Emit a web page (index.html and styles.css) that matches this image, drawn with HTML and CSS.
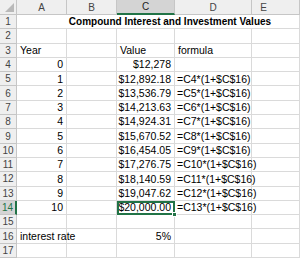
FILE: index.html
```html
<!DOCTYPE html>
<html>
<head>
<meta charset="utf-8">
<link rel="stylesheet" href="styles.css">
</head>
<body>
<div class="sheet">
  <div class="hd corner"><span class="tri"></span></div>
  <div class="hd col">A</div>
  <div class="hd col">B</div>
  <div class="hd col sel">C</div>
  <div class="hd col">D</div>
  <div class="hd col last">E</div>

  <div class="hd row">1</div>
  <div class="c title">Compound Interest and Investment Values</div>

  <div class="hd row">2</div>
  <div class="c"></div><div class="c"></div><div class="c"></div><div class="c"></div><div class="c"></div>

  <div class="hd row">3</div>
  <div class="c">Year</div><div class="c"></div><div class="c">Value</div><div class="c">formula</div><div class="c"></div>

  <div class="hd row">4</div>
  <div class="c r">0</div><div class="c"></div><div class="c r">$12,278</div><div class="c"></div><div class="c"></div>

  <div class="hd row">5</div>
  <div class="c r">1</div><div class="c"></div><div class="c r">$12,892.18</div><div class="c f">=C4*(1+$C$16)</div><div class="c"></div>

  <div class="hd row">6</div>
  <div class="c r">2</div><div class="c"></div><div class="c r">$13,536.79</div><div class="c f">=C5*(1+$C$16)</div><div class="c"></div>

  <div class="hd row">7</div>
  <div class="c r">3</div><div class="c"></div><div class="c r">$14,213.63</div><div class="c f">=C6*(1+$C$16)</div><div class="c"></div>

  <div class="hd row">8</div>
  <div class="c r">4</div><div class="c"></div><div class="c r">$14,924.31</div><div class="c f">=C7*(1+$C$16)</div><div class="c"></div>

  <div class="hd row">9</div>
  <div class="c r">5</div><div class="c"></div><div class="c r">$15,670.52</div><div class="c f">=C8*(1+$C$16)</div><div class="c"></div>

  <div class="hd row">10</div>
  <div class="c r">6</div><div class="c"></div><div class="c r">$16,454.05</div><div class="c f">=C9*(1+$C$16)</div><div class="c"></div>

  <div class="hd row">11</div>
  <div class="c r">7</div><div class="c"></div><div class="c r">$17,276.75</div><div class="c f">=C10*(1+$C$16)</div><div class="c"></div>

  <div class="hd row">12</div>
  <div class="c r">8</div><div class="c"></div><div class="c r">$18,140.59</div><div class="c f">=C11*(1+$C$16)</div><div class="c"></div>

  <div class="hd row">13</div>
  <div class="c r">9</div><div class="c"></div><div class="c r">$19,047.62</div><div class="c f">=C12*(1+$C$16)</div><div class="c"></div>

  <div class="hd row selr">14</div>
  <div class="c r">10</div><div class="c"></div><div class="c r active">$20,000.00<span class="handle"></span></div><div class="c f">=C13*(1+$C$16)</div><div class="c"></div>

  <div class="hd row">15</div>
  <div class="c"></div><div class="c"></div><div class="c"></div><div class="c"></div><div class="c"></div>

  <div class="hd row">16</div>
  <div class="c ov">interest rate</div><div class="c"></div><div class="c r">5%</div><div class="c"></div><div class="c"></div>

  <div class="hd row">17</div>
  <div class="c"></div><div class="c"></div><div class="c"></div><div class="c"></div><div class="c"></div>
</div>
</body>
</html>
```

FILE: styles.css
```css
html, body {
  margin: 0;
  padding: 0;
  background: #ffffff;
  overflow: hidden;
}

.sheet {
  display: grid;
  grid-template-columns: 17px 50px 50px 58px 77px 48px;
  grid-template-rows: 15px repeat(17, 14.3px);
  font-family: "Liberation Sans", Arial, sans-serif;
  font-size: 10.5px;
  color: #000;
  width: 300px;
  overflow: hidden;
}

.hd {
  box-sizing: border-box;
  background: #efefef;
  color: #444;
  display: flex;
  align-items: center;
  justify-content: center;
  border-right: 1px solid #c6c6c6;
  border-bottom: 1px solid #c6c6c6;
  font-size: 10px;
}

.hd.last {
  padding-right: 24px;
}

.corner {
  position: relative;
}

.tri {
  position: absolute;
  right: 2px;
  bottom: 2px;
  width: 0;
  height: 0;
  border-left: 9px solid transparent;
  border-bottom: 9px solid #b9b9b9;
}

.col.sel {
  background: #d4d4d4;
  border-bottom: 2px solid #217346;
  color: #222;
}

.row.selr {
  background: #d4d4d4;
  border-right: 2px solid #217346;
  color: #217346;
}

.c {
  box-sizing: border-box;
  border-right: 1px solid #dadada;
  border-bottom: 1px solid #dadada;
  padding: 0 3px;
  display: flex;
  align-items: center;
  white-space: nowrap;
  overflow: visible;
  line-height: 1;
}

.c.r {
  justify-content: flex-end;
}

.c.f {
  padding-left: 2px;
}

.c.ov {
  position: relative;
  z-index: 1;
}

.title {
  grid-column: span 5;
  justify-content: center;
  font-weight: bold;
  font-size: 10px;
  padding-left: 24px;
  padding-right: 0;
}

.active {
  position: relative;
  outline: 2px solid #217346;
  outline-offset: -2px;
}

.handle {
  position: absolute;
  right: -3px;
  bottom: -3px;
  width: 5px;
  height: 5px;
  background: #217346;
  border: 1px solid #fff;
  box-sizing: border-box;
}
```
